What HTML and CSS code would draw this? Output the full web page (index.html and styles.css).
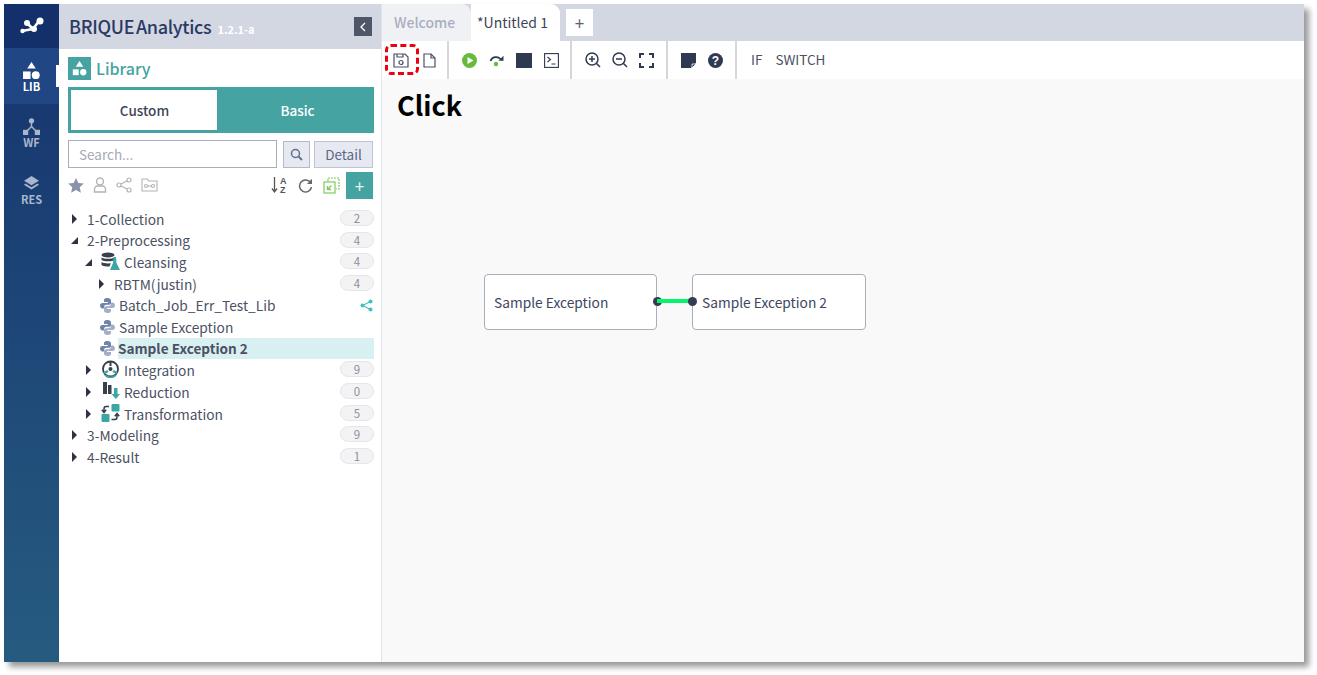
FILE: index.html
```html
<!DOCTYPE html>
<html lang="en">
<head>
<meta charset="utf-8">
<title>BRIQUE Analytics</title>
<link rel="stylesheet" href="styles.css">
</head>
<body>
<div class="window">
  <nav class="rail">
    <div class="rail-logo">
      <svg width="24" height="18" viewBox="0 0 24 18"><path d="M2 14L13 12 7 6M13 12l6-8" fill="none" stroke="#fff" stroke-width="2.600"/><circle cx="2.500" cy="14" r="2.200" fill="#fff"/><circle cx="7" cy="6" r="3" fill="#fff"/><circle cx="14" cy="12" r="3" fill="#fff"/><circle cx="20" cy="4" r="3.500" fill="#fff"/></svg>
    </div>
    <div class="rail-item active">
      <svg width="17" height="17" viewBox="0 0 18 18"><path d="M9 0l4.500 7h-9z" fill="#fff"/><rect x="0" y="10" width="8" height="8" fill="#fff"/><circle cx="13.500" cy="14" r="4.200" fill="#fff"/></svg>
      <span>LIB</span>
    </div>
    <div class="rail-item">
      <svg width="17" height="17" viewBox="0 0 18 18" fill="#a9b6cc"><circle cx="9" cy="3" r="2.800"/><rect x="0" y="12.500" width="5.500" height="5.500"/><rect x="12.500" y="12.500" width="5.500" height="5.500"/><path d="M9 4v6M9 9l-5 5M9 9l5 5" stroke="#a9b6cc" stroke-width="1.500" fill="none"/></svg>
      <span>WF</span>
    </div>
    <div class="rail-item rail-res">
      <svg width="17" height="14" viewBox="0 0 18 15" fill="#a9b6cc"><path d="M9 0l8 5-8 5-8-5z"/><path d="M2.500 8L1 9.300l8 5.200 8-5.200L15.500 8 9 12z"/></svg>
      <span>RES</span>
    </div>
  </nav>

  <aside class="side">
    <header class="side-head">
      <div class="brand"><span class="brand-name">BRIQUE Analytics</span><span class="brand-ver">1.2.1-a</span></div>
      <button class="collapse"><svg width="8" height="10" viewBox="0 0 8 10"><path d="M6 1L2 5l4 4" fill="none" stroke="#fff" stroke-width="1.300"/></svg></button>
    </header>

    <div class="side-body">
      <div class="lib-title">
        <span class="lib-icon"><svg width="15" height="15" viewBox="0 0 18 18"><path d="M9 0l4.500 7h-9z" fill="#fff"/><rect x="1" y="10" width="7" height="7" fill="#fff"/><circle cx="13.500" cy="13.500" r="3.800" fill="#fff"/></svg></span>
        <span class="lib-text">Library</span>
      </div>

      <div class="seg">
        <div class="seg-item seg-on">Custom</div>
        <div class="seg-item seg-off">Basic</div>
      </div>

      <div class="search-row">
        <div class="search-input">Search...</div>
        <button class="search-btn"><svg width="13" height="13" viewBox="0 0 13 13"><circle cx="5.500" cy="5.500" r="4" fill="none" stroke="#5f6e8e" stroke-width="1.500"/><path d="M8.500 8.500l3.500 3.500" stroke="#5f6e8e" stroke-width="1.800"/></svg></button>
        <button class="detail-btn">Detail</button>
      </div>

      <div class="tools">
        <div class="tools-left">
          <svg width="16" height="15" viewBox="0 0 16 15"><path d="M8 0l2.300 5 5.500.6-4.100 3.700 1.200 5.400L8 12l-4.900 2.700 1.200-5.400L.2 5.600 5.700 5z" fill="#8b93a8"/></svg>
          <svg width="14" height="16" viewBox="0 0 14 16" fill="none" stroke="#b4b4b4" stroke-width="1.400"><circle cx="7" cy="4.500" r="3.500"/><path d="M1.500 15v-3a3 3 0 0 1 3-3h5a3 3 0 0 1 3 3v3z"/></svg>
          <svg width="16" height="16" viewBox="0 0 16 16" fill="none" stroke="#b4b4b4" stroke-width="1.200"><circle cx="3" cy="8" r="2"/><circle cx="13" cy="3" r="2"/><circle cx="13" cy="13" r="2"/><path d="M5 7l6-3M5 9l6 3"/></svg>
          <svg width="17" height="14" viewBox="0 0 17 14" fill="none" stroke="#b4b4b4" stroke-width="1.100"><path d="M1 13V1h5l2 2h8v10z"/><circle cx="5" cy="8" r="1.500"/><circle cx="12" cy="8" r="1.500"/><path d="M6.500 8h4"/></svg>
        </div>
        <div class="tools-right">
          <svg width="17" height="18" viewBox="0 0 17 18"><path d="M3.500 1v14M1 12.500L3.500 16 6 12.500" fill="none" stroke="#555" stroke-width="1.300"/><text x="9" y="7.500" class="az">A</text><text x="9" y="17" class="az">Z</text></svg>
          <svg width="15" height="15" viewBox="0 0 15 15"><path d="M12.800 5A6 6 0 1 0 13.500 9" fill="none" stroke="#666" stroke-width="1.500"/><path d="M14 .8V6H9z" fill="#666"/></svg>
          <svg width="17" height="17" viewBox="0 0 17 17" fill="none" stroke="#7ecb5a" stroke-width="1.200"><path d="M5 4V1h11v11h-3" stroke-dasharray="2 1"/><rect x="1" y="5" width="11" height="11" fill="#fff"/><path d="M8.500 8.500L4.500 12.500M4.500 9v3.500H8" stroke-width="1.400"/></svg>
          <button class="add-btn">+</button>
        </div>
      </div>

      <ul class="tree">
        <li class="row lv0"><i class="tri"></i><span class="label">1-Collection</span><b class="count">2</b></li>
        <li class="row lv0"><i class="tri open"></i><span class="label">2-Preprocessing</span><b class="count">4</b></li>
        <li class="row lv1"><i class="tri open"></i>
          <svg class="ticon" width="19" height="18" viewBox="0 0 19 18"><ellipse cx="7" cy="3" rx="6.500" ry="2.500" fill="#3a3f4c"/><path d="M.5 5.500c2 1.800 11 1.800 13 0v2.500c-2 1.800-11 1.800-13 0zM.5 10c2 1.600 8 1.800 9.500 1l-1.500 3.500c-3 0-7-.5-8-1.500z" fill="#3a3f4c"/><path d="M12.500 5h2.500l.5 6 3.500 7H9l3-7z" fill="#3ba7a4"/></svg>
          <span class="label">Cleansing</span><b class="count">4</b></li>
        <li class="row lv2"><i class="tri"></i><span class="label">RBTM(justin)</span><b class="count">4</b></li>
        <li class="row lv3">
          <svg class="py" width="15" height="15" viewBox="0 0 15 15"><path d="M7.500 0C4.500 0 4 1.200 4 2.500V4h3.800v1H2.500C1 5 0 6 0 7.500S1 10.500 2.500 10.500H4V9c0-1.200 1-2.200 2.200-2.200h3C10.300 6.800 11 6 11 5V2.500C11 1 9.800 0 7.500 0z" fill="#6f83ab"/><path d="M7.500 15c3 0 3.500-1.200 3.500-2.500V11H7.200v-1h5.300c1.500 0 2.500-1 2.500-2.500S14 4.500 12.500 4.500H11V6c0 1.200-1 2.200-2.200 2.200h-3C4.700 8.200 4 9 4 10v2.500C4 14 5.200 15 7.500 15z" fill="#a3aec7"/></svg>
          <span class="label">Batch_Job_Err_Test_Lib</span>
          <svg class="share" width="13" height="13" viewBox="0 0 13 13" fill="#45c0c0"><circle cx="2.500" cy="6.500" r="2"/><circle cx="10.500" cy="2.500" r="2"/><circle cx="10.500" cy="10.500" r="2"/><path d="M2.500 6.500l8-4M2.500 6.500l8 4" stroke="#45c0c0" stroke-width="1.100"/></svg>
        </li>
        <li class="row lv3">
          <svg class="py" width="15" height="15" viewBox="0 0 15 15"><path d="M7.500 0C4.500 0 4 1.200 4 2.500V4h3.800v1H2.500C1 5 0 6 0 7.500S1 10.500 2.500 10.500H4V9c0-1.200 1-2.200 2.200-2.200h3C10.300 6.800 11 6 11 5V2.500C11 1 9.800 0 7.500 0z" fill="#6f83ab"/><path d="M7.500 15c3 0 3.500-1.200 3.500-2.500V11H7.200v-1h5.300c1.500 0 2.500-1 2.500-2.500S14 4.500 12.500 4.500H11V6c0 1.200-1 2.200-2.200 2.200h-3C4.700 8.200 4 9 4 10v2.500C4 14 5.200 15 7.500 15z" fill="#a3aec7"/></svg>
          <span class="label">Sample Exception</span>
        </li>
        <li class="row lv3">
          <svg class="py" width="15" height="15" viewBox="0 0 15 15"><path d="M7.500 0C4.500 0 4 1.200 4 2.500V4h3.800v1H2.500C1 5 0 6 0 7.500S1 10.500 2.500 10.500H4V9c0-1.200 1-2.200 2.200-2.200h3C10.300 6.800 11 6 11 5V2.500C11 1 9.800 0 7.500 0z" fill="#6f83ab"/><path d="M7.500 15c3 0 3.500-1.200 3.500-2.500V11H7.200v-1h5.300c1.500 0 2.500-1 2.500-2.500S14 4.500 12.500 4.500H11V6c0 1.200-1 2.200-2.200 2.200h-3C4.700 8.200 4 9 4 10v2.500C4 14 5.200 15 7.500 15z" fill="#a3aec7"/></svg>
          <span class="label selected">Sample Exception 2</span>
        </li>
        <li class="row lv1"><i class="tri"></i>
          <svg class="ticon" width="19" height="18" viewBox="0 0 19 18"><circle cx="9.500" cy="9" r="7.500" fill="none" stroke="#3a3f4c" stroke-width="1.800"/><circle cx="9.500" cy="9" r="2" fill="#3a3f4c"/><path d="M9.500 1.500V6" stroke="#3a3f4c" stroke-width="2"/><path d="M3 13l4-2M16 13l-4-2" stroke="#3ba7a4" stroke-width="2.400"/><path d="M4 15a7.500 7.500 0 0 0 11 0" fill="none" stroke="#3ba7a4" stroke-width="1.800"/></svg>
          <span class="label">Integration</span><b class="count">9</b></li>
        <li class="row lv1"><i class="tri"></i>
          <svg class="ticon" width="19" height="18" viewBox="0 0 19 18"><rect x="2" y="0" width="4" height="12" fill="#3a3f4c"/><rect x="7" y="3" width="3.500" height="9" fill="#3a3f4c"/><path d="M13 6h3.500v6h2.500l-4.200 5-4.300-5H13z" fill="#3ba7a4"/></svg>
          <span class="label">Reduction</span><b class="count">0</b></li>
        <li class="row lv1"><i class="tri"></i>
          <svg class="ticon" width="19" height="18" viewBox="0 0 19 18"><rect x="10.500" y="0" width="8" height="7.500" rx="1" fill="#3ba7a4"/><rect x=".5" y="10" width="8" height="8" rx="1" fill="#3ba7a4"/><path d="M8 2.500H5C3.500 2.500 3 3.500 3 5v3M.8 5.800L3 8.500l2.200-2.700M10.500 15.500H14c1.500 0 2-1 2-2.500v-3M13.800 12.200L16 9.500l2.200 2.700" fill="none" stroke="#3a3f4c" stroke-width="1.500"/></svg>
          <span class="label">Transformation</span><b class="count">5</b></li>
        <li class="row lv0"><i class="tri"></i><span class="label">3-Modeling</span><b class="count">9</b></li>
        <li class="row lv0"><i class="tri"></i><span class="label">4-Result</span><b class="count">1</b></li>
      </ul>
    </div>
  </aside>

  <main class="main">
    <div class="tabs">
      <div class="tab tab-off">Welcome</div>
      <div class="tab tab-on">*Untitled 1</div>
      <button class="tab-add">+</button>
    </div>

    <div class="toolbar">
      <div class="tgroup g1">
        <svg width="16" height="15" viewBox="0 0 16 15" fill="none" stroke="#4a5064" stroke-width="1.200"><path d="M1 1h11l3 3v10H1z"/><path d="M4 1v3h6V1"/><circle cx="8" cy="9.500" r="2"/></svg>
        <svg width="13" height="15" viewBox="0 0 13 15" fill="none" stroke="#4a5064" stroke-width="1.200"><path d="M1 1h7l4 4v9H1z"/><path d="M8 1v4h4"/></svg>
      </div>
      <div class="tgroup g2">
        <svg width="15" height="15" viewBox="0 0 15 15"><circle cx="7.500" cy="7.500" r="7.500" fill="#67bb3c"/><path d="M5.500 4l6 3.500-6 3.500z" fill="#fff"/></svg>
        <svg width="15" height="15" viewBox="0 0 15 15"><path d="M1.500 8a6 6 0 0 1 10-2" fill="none" stroke="#2f3a52" stroke-width="1.800"/><path d="M14.500 2.800v5h-5z" fill="#2f3a52"/><circle cx="7" cy="11" r="2.200" fill="#67bb3c"/></svg>
        <span class="stop"></span>
        <svg width="15" height="15" viewBox="0 0 15 15" fill="none" stroke="#2f3a52" stroke-width="1.100"><rect x=".6" y=".6" width="13.800" height="13.800"/><path d="M3.500 4l3 2.500-3 2.500M7.500 11h4"/></svg>
      </div>
      <div class="tgroup g3">
        <svg width="16" height="16" viewBox="0 0 16 16" fill="none" stroke="#2f3a52" stroke-width="1.500"><circle cx="7" cy="7" r="6"/><path d="M11.500 11.500l3.500 3.500M4 7h6M7 4v6"/></svg>
        <svg width="16" height="16" viewBox="0 0 16 16" fill="none" stroke="#2f3a52" stroke-width="1.500"><circle cx="7" cy="7" r="6"/><path d="M11.500 11.500l3.500 3.500M4 7h6"/></svg>
        <svg width="15" height="15" viewBox="0 0 15 15" fill="none" stroke="#2f3a52" stroke-width="2"><path d="M1 5V1h4M10 1h4v4M14 10v4h-4M5 14H1v-4"/></svg>
      </div>
      <div class="tgroup g4">
        <svg width="15" height="15" viewBox="0 0 15 15"><path d="M0 0h15v10l-5 5H0z" fill="#2f3a52"/><path d="M15 11h-4v4z" fill="#2f3a52" stroke="#fff" stroke-width=".8"/></svg>
        <svg width="15" height="15" viewBox="0 0 15 15"><circle cx="7.500" cy="7.500" r="7.500" fill="#2f3a52"/><text x="7.500" y="11.700" class="help">?</text></svg>
      </div>
      <div class="tgroup g5"><span>IF</span><span>SWITCH</span></div>
    </div>

    <div class="canvas">
      <span class="click">Click</span>
      <span class="marker"></span>
      <div class="node n1">Sample Exception</div>
      <div class="node n2">Sample Exception 2</div>
      <span class="port p1"></span>
      <span class="link"></span>
      <span class="port p2"></span>
    </div>
  </main>
</div>
</body>
</html>
```

FILE: styles.css
```css
* { box-sizing: border-box; }
html, body { margin: 0; padding: 0; height: 100%; background: #fff; overflow: hidden; }
body { font-family: "Noto Sans CJK KR", "Noto Sans", sans-serif; color: #3d4457; }
ul { list-style: none; margin: 0; padding: 0; }
button { font-family: inherit; padding: 0; }
svg { display: block; flex: none; }

.window {
  display: flex;
  width: 1300px;
  height: 658px;
  margin: 4px 0 0 4px;
  box-shadow: 5px 5px 6px rgba(0, 0, 0, .4);
  background: #fff;
}

/* rail */
.rail {
  width: 55px;
  flex: none;
  background: linear-gradient(#15336e, #265b80);
}
.rail-logo {
  height: 44px;
  display: flex;
  align-items: center;
  justify-content: center;
  background: #13306a;
}
.rail-item {
  position: relative;
  height: 56px;
  display: flex;
  flex-direction: column;
  align-items: center;
  justify-content: center;
  color: #a9b6cc;
  font-size: 11px;
  font-weight: 700;
  line-height: 12px;
  padding-top: 2px;
}
.rail-item span { margin-top: 1px; }
.rail-res { padding-top: 4px; }
.rail-res span { margin-top: 3px; }
.rail-item.active { background: #204683; color: #fff; }
.rail-item.active::after {
  content: "";
  position: absolute;
  right: 0;
  top: 17px;
  width: 3px;
  height: 22px;
  background: #fff;
}

/* side */
.side {
  width: 323px;
  flex: none;
  border-right: 1px solid #e3e5ea;
  display: flex;
  flex-direction: column;
}
.side-head {
  height: 45px;
  background: #d3d7e2;
  display: flex;
  align-items: center;
  justify-content: space-between;
  padding: 0 9px 2px 10px;
}
.brand { display: flex; align-items: baseline; gap: 6px; }
.brand-name { font-size: 18px; font-weight: 500; color: #2a3a63; letter-spacing: -.3px; word-spacing: -2px; }
.brand-ver { font-size: 11px; font-weight: 700; color: #fff; }
.collapse {
  width: 18px;
  height: 19px;
  margin-top: 2px;
  background: #4f5668;
  border: 0;
  display: flex;
  align-items: center;
  justify-content: center;
}
.side-body { padding: 8px 7px 0 9px; }
.lib-title { display: flex; align-items: center; gap: 5px; height: 23px; }
.lib-icon {
  width: 23px;
  height: 23px;
  background: #45a3a2;
  display: flex;
  align-items: center;
  justify-content: center;
}
.lib-text { font-size: 16px; font-weight: 500; color: #45a3a2; margin-top: -2px; }

.seg {
  display: flex;
  height: 46px;
  margin-top: 7px;
  background: #45a3a2;
  border: 3px solid #45a3a2;
}
.seg-item {
  flex: 1;
  display: flex;
  align-items: center;
  justify-content: center;
  font-size: 13.500px;
  font-weight: 500;
  color: #fff;
}
.seg-off { padding-left: 7px; }
.seg-on { flex: none; width: 146px; background: #fff; color: #3d4457; padding-left: 1px; }

.search-row { display: flex; align-items: center; margin-top: 7px; height: 28px; }
.search-input {
  width: 209px;
  height: 28px;
  border: 1px solid #a9aebd;
  font-size: 13.500px;
  color: #a5a9b6;
  padding-left: 10px;
  line-height: 26px;
}
.search-btn {
  width: 27px;
  height: 27px;
  margin-left: 6px;
  background: #e7e9f2;
  border: 1px solid #b4b9c8;
  display: flex;
  align-items: center;
  justify-content: center;
}
.detail-btn {
  width: 59px;
  height: 27px;
  margin-left: 4px;
  background: #e7e9f2;
  border: 1px solid #c0c4d2;
  font-size: 13.500px;
  color: #5b6684;
  line-height: 25px;
}

.tools {
  display: flex;
  align-items: center;
  justify-content: space-between;
  height: 28px;
  margin-top: 3px;
}
.tools-left { display: flex; align-items: center; gap: 9px; }
.tools-right { display: flex; align-items: center; gap: 10px; padding-right: 1px; }
.az { font: 700 9px "Liberation Sans", sans-serif; fill: #555; }
.add-btn {
  width: 27px;
  height: 27px;
  margin-left: -4px;
  border: 0;
  background: #45a3a2;
  color: #e8f4f4;
  font-size: 17px;
  line-height: 25px;
}

.tree { margin-top: 9px; }
.row {
  display: flex;
  align-items: center;
  height: 21.650px;
  font-size: 13.750px;
  color: #4b5163;
  position: relative;
}
.label { white-space: nowrap; }
.tri {
  width: 0;
  height: 0;
  flex: none;
  border-top: 5px solid transparent;
  border-bottom: 5px solid transparent;
  border-left: 5px solid #2e3342;
  margin-right: 10px;
  margin-left: 4px;
}
.tri.open {
  border-width: 0 0 7px 7px;
  border-color: transparent transparent #2e3342 transparent;
  border-style: solid;
  margin-left: 3px;
  margin-right: 9px;
}
.lv0 { padding-left: 0; }
.lv1 { padding-left: 14px; }
.lv2 { padding-left: 27px; }
.lv3 { padding-left: 32px; }
.ticon { margin: -2px 4px 0 0; }
.py { margin-right: 4px; }
.count {
  position: absolute;
  right: 0;
  top: 2px;
  width: 34px;
  height: 16px;
  border: 1px solid #e6e6e8;
  border-radius: 8px;
  background: #f3f3f5;
  font-size: 11.500px;
  font-weight: 400;
  line-height: 14px;
  text-align: center;
  color: #8f8f98;
}
.share { position: absolute; right: 1px; top: 4px; }
.selected {
  flex: 1;
  height: 21px;
  line-height: 20px;
  margin-left: -1px;
  background: #d8f0f2;
  font-size: 13.600px;
  font-weight: 700;
}

/* main */
.main { flex: 1; display: flex; flex-direction: column; min-width: 0; }
.tabs { height: 37px; background: #d3d7e2; display: flex; flex: none; }
.tab {
  height: 37px;
  display: flex;
  align-items: center;
  font-size: 14px;
  padding-bottom: 2px;
  border-top-right-radius: 9px;
}
.tab-off { width: 89px; padding-left: 12px; background: #f0f1f5; color: #a9afbf; font-weight: 500; }
.tab-on { width: 89px; padding-left: 6px; background: #fff; color: #3d4457; }
.tab-add {
  width: 27px;
  height: 27px;
  margin: 5px 0 0 6px;
  border: 0;
  background: #fff;
  font-size: 17px;
  line-height: 25px;
  color: #5b6170;
}

.toolbar { height: 38px; flex: none; display: flex; background: #fff; }
.tgroup {
  display: flex;
  align-items: center;
  border-right: 2px solid #d6d6d6;
}
.g1 { width: 67px; padding-left: 11px; gap: 14px; }
.g2 { width: 123px; padding-left: 13px; gap: 12px; }
.g3 { width: 96px; padding-left: 13px; gap: 11px; }
.g4 { width: 69px; padding-left: 13px; gap: 12px; }
.g5 { border: 0; padding: 0 0 2px 14px; gap: 13px; font-size: 13.500px; color: #4b5163; }
.stop { width: 16px; height: 15px; background: #2f3a52; flex: none; }
.help { font: 700 12px "Liberation Sans", sans-serif; fill: #fff; text-anchor: middle; }

.canvas { flex: 1; position: relative; background: #f9f9f9; }
.click {
  position: absolute;
  left: 15px;
  top: 5px;
  font-size: 27px;
  line-height: 42px;
  font-weight: 700;
  color: #000;
}
.marker {
  position: absolute;
  left: 3px;
  top: -35px;
  width: 34px;
  height: 31px;
  border: 3px dashed #f0000f;
  border-radius: 6px;
}
.node {
  position: absolute;
  top: 195px;
  width: 173px;
  height: 56px;
  background: #fff;
  border: 1px solid #a9aebb;
  border-radius: 4px;
  font-size: 13.750px;
  line-height: 54px;
  color: #3d4661;
}
.n1 { left: 102px; padding-left: 9px; }
.n2 { left: 310px; width: 174px; padding-left: 9px; }
.link {
  position: absolute;
  left: 275px;
  top: 220px;
  width: 36px;
  height: 4px;
  background: #05f56a;
}
.port {
  position: absolute;
  top: 218px;
  width: 9px;
  height: 9px;
  border-radius: 50%;
  background: #333c52;
}
.p1 { left: 271px; }
.p2 { left: 306px; }
```
